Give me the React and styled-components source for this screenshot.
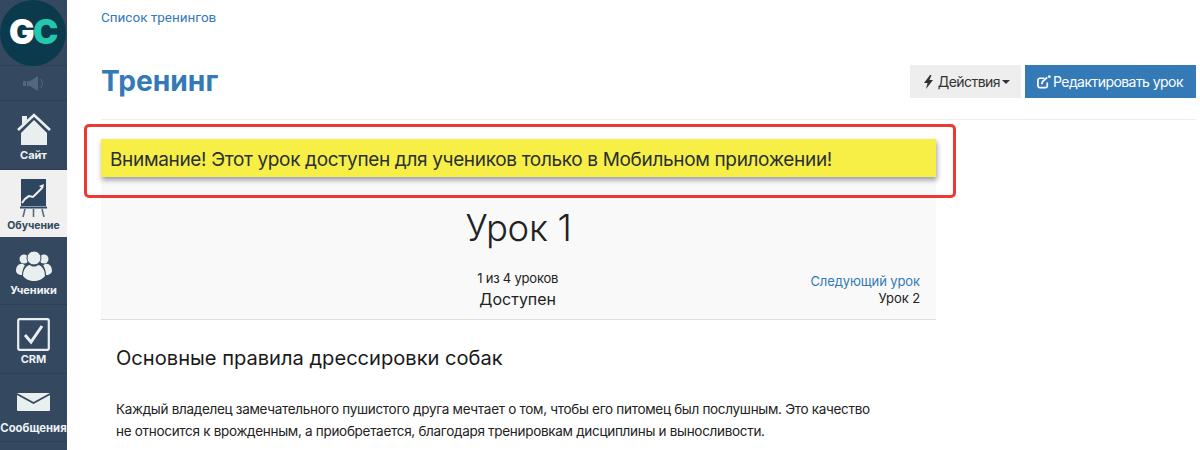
import React from "react";
import styled, { createGlobalStyle } from "styled-components";

const Global = createGlobalStyle`
  html, body { margin: 0; padding: 0; background: #fff; height: 450px; overflow: hidden; }
  #root { height: 450px; }
  * { box-sizing: border-box; }
`;
const Page = styled.div`
  display: flex; width: 1200px; height: 450px; overflow: hidden;
  font-family: Inter, "Liberation Sans", sans-serif; color: #222;
`;
const Sidebar = styled.nav`
  width: 67px; flex: none; background: #34495f; display: flex; flex-direction: column;
`;
const LogoCell = styled.div`
  height: 66px; border-bottom: 1px solid #2d4056; position: relative;
`;
const LogoCircle = styled.div`
  width: 66px; height: 66px; border-radius: 50%; background: #0b3a4c;
  display: flex; align-items: center; justify-content: center;
  font: 900 34px/1 Inter, sans-serif; letter-spacing: -1.5px; color: #fff; padding-bottom: 2px;
`;
const Teal = styled.span` color: #22c7ad; `;
const Speaker = styled.div`
  height: 35px; border-bottom: 1px solid #2d4056; display: flex; align-items: center; justify-content: center;
`;
const Item = styled.div`
  height: ${p => p.$h}px; flex: none; display: flex; flex-direction: column; align-items: center;
  padding-top: ${p => p.$pt}px; border-bottom: 1px solid ${p => p.$active ? "#f0f0f0" : "#2d4056"};
  background: ${p => p.$active ? "#f0f0f0" : "transparent"};
  color: ${p => p.$active ? "#34495f" : "#eef2f3"};
  font: 700 ${p => p.$fs || 11}px/14px Inter, "Liberation Sans", sans-serif; white-space: nowrap;
  svg { display: block; flex: none; margin-bottom: ${p => p.$gap}px; }
`;
const Main = styled.main`
  flex: 1; min-width: 0; padding-left: 34px; padding-right: 4px; position: relative;
`;
const Crumb = styled.a`
  display: block; height: 34px; padding-top: 9px; font: 400 13.5px/16px Roboto, sans-serif; color: #337ab7;
`;
const Header = styled.header`
  height: 86px; border-bottom: 1px solid #eee; display: flex; justify-content: space-between; padding-top: 30px;
`;
const Title = styled.h1`
  margin: 0; font: 700 28.2px/34px Inter, sans-serif; color: #337ab7;
`;
const Actions = styled.div` display: flex; gap: 4px; height: 33px; margin-top: 1px; `;
const Btn = styled.button`
  border: 0; height: 33px; padding: 0 ${p => p.$primary ? 13 : 11}px 0 ${p => p.$primary ? 12 : 14}px;
  display: flex; align-items: center; gap: ${p => p.$primary ? 2 : 5}px;
  background: ${p => p.$primary ? "#337ab7" : "#eee"}; color: ${p => p.$primary ? "#fff" : "#333"};
  font: 400 14px/20px Inter, sans-serif; letter-spacing: -0.55px;
`;
const Caret = styled.i`
  width: 0; height: 0; border-left: 4px solid transparent; border-right: 4px solid transparent; border-top: 4px solid #333; margin-left: -3px;
`;
const Content = styled.section` width: 835px; padding-top: 19px; `;
const Notice = styled.div`
  height: 38px; background: #f7ef45; padding-left: 9px; position: relative; z-index: 1;
  font: 400 19px/41px Inter, sans-serif; letter-spacing: -0.34px; color: #2a2f38; white-space: nowrap;
  box-shadow: 1px 3px 5px rgba(60,60,90,.5);
`;
const RedFrame = styled.div`
  position: absolute; left: 17px; top: 124px; width: 872px; height: 74px; z-index: 2;
  border: 3px solid #ea3a32; border-radius: 5px; pointer-events: none;
`;
const LessonHead = styled.div`
  height: 143px; background: #f9f9f9; border-bottom: 1px solid #ddd; padding: 26px 16px 0; position: relative;
`;
const LessonTitle = styled.div`
  text-align: center; font: 300 36.5px/50px Inter, sans-serif; color: #222; letter-spacing: -0.3px;
`;
const MetaRow = styled.div`
  display: grid; grid-template-columns: 1fr auto; align-items: start; margin-top: 15px;
`;
const Center = styled.div`
  text-align: center; font: 400 13px/21px Inter, sans-serif; letter-spacing: -0.2px; padding-left: 108px;
`;
const Status = styled.div` font-size: 16px; line-height: 21px; letter-spacing: 0; `;
const Next = styled.div`
  text-align: right; font: 400 13px/17px Inter, sans-serif; letter-spacing: -0.1px; margin-top: 5px;
  a { color: #337ab7; display: block; }
`;
const Body = styled.article` padding: 25px 15px 0; `;
const H2 = styled.h2`
  margin: 0 0 28px; font: 400 20.1px/26px Inter, sans-serif; color: #1a1a1a;
`;
const P = styled.p`
  margin: 0; font: 400 13.5px/21.5px Inter, sans-serif; letter-spacing: -0.3px; color: #222; width: 760px;
`;

const c = "#e9eeef";
const icons = {
  home: (
    <svg width="34" height="33" viewBox="0 0 34 33">
      <path fill={c} d="M4 20 17 7l13 13v12H4z" />
      <path fill="none" stroke={c} strokeWidth="2.6" d="M1 17 17 2l16 15" />
      <path fill={c} d="M5 3h5v4l-5 5z" />
    </svg>
  ),
  chart: (
    <svg width="27" height="38" viewBox="0 0 27 38">
      <rect x="1" y="0" width="25" height="27" fill="#2f4661" />
      <path fill="none" stroke="#f0f0f0" strokeWidth="2" d="M2 24q3-5 7-7l4 1 5-5 4-4" />
      <path fill="#f0f0f0" d="M19 7l5-2-1 5z" />
      <rect x="0" y="27.500" width="27" height="2" fill="#2f4661" />
      <path stroke="#5b6a7c" strokeWidth="1.600" fill="none" d="M5 30 3 38M13.500 30v8M22 30l2 8" />
    </svg>
  ),
  group: (
    <svg width="36" height="30" viewBox="0 0 36 30">
      <g fill={c}>
        <circle cx="8" cy="8" r="4.500" />
        <circle cx="28" cy="8" r="4.500" />
        <path d="M0 20c0-5 3-8 7-7 1 1 2 1 2 1-2 3-3 7-3 10l-2 0c-2-1-4-2-4-4zM36 20c0-5-3-8-7-7-1 1-2 1-2 1 2 3 3 7 3 10l2 0c2-1 4-2 4-4z" />
        <circle cx="18" cy="7" r="7" stroke="#34495f" strokeWidth="1" />
        <path d="M7 25c0-7 4-11 7-11 2 2 6 2 8 0 3 0 7 4 7 11-2 3-7 5-11 5s-9-2-11-5z" />
      </g>
    </svg>
  ),
  crm: (
    <svg width="33" height="33" viewBox="0 0 33 33">
      <rect x="1.200" y="1.200" width="30.600" height="30.600" rx="1.500" fill="none" stroke={c} strokeWidth="2.200" />
      <path fill="none" stroke={c} strokeWidth="3" d="M8 17l6 7 11-16" />
    </svg>
  ),
  mail: (
    <svg width="33" height="18" viewBox="0 0 33 18">
      <path fill={c} d="M1 0h31q1 0 1 1v16q0 1-1 1H1q-1 0-1-1V1q0-1 1-1z" />
      <path fill="none" stroke="#34495f" strokeWidth="1.800" d="M0 1l16.500 9L33 1" />
    </svg>
  ),
};

export default function App() {
  return (
    <Page>
      <Global />
      <Sidebar>
        <LogoCell><LogoCircle>G<Teal>C</Teal></LogoCircle></LogoCell>
        <Speaker>
          <svg width="22" height="15" viewBox="0 0 22 15">
            <path fill="#55677c" d="M0 5h3v5H0zM4 5h3l8-5v15l-8-5H4z" />
            <path fill="none" stroke="#55677c" d="M18 3q3 4.500 0 9" />
          </svg>
        </Speaker>
        <Item $h={69} $pt={12} $gap={2}>{icons.home}Сайт</Item>
        <Item $h={67} $pt={9} $gap={2} $active $fs={10.500}>{icons.chart}Обучение</Item>
        <Item $h={68} $pt={14} $gap={2}>{icons.group}Ученики</Item>
        <Item $h={69} $pt={13} $gap={1}>{icons.crm}CRM</Item>
        <Item $h={68} $pt={19} $gap={10} $fs={11.300}>{icons.mail}Сообщения</Item>
      </Sidebar>
      <Main>
        <Crumb>Список тренингов</Crumb>
        <Header>
          <Title>Тренинг</Title>
          <Actions>
            <Btn>
              <svg width="9" height="14" viewBox="0 0 9 14"><path fill="#333" d="M6 0 0 8h3.500L2 14l7-9H5.500l2-5z" /></svg>
              Действия<Caret />
            </Btn>
            <Btn $primary>
              <svg width="14" height="14" viewBox="0 0 15 14">
                <path fill="none" stroke="#fff" strokeWidth="1.800" d="M11 7.500V11a2 2 0 0 1-2 2H3a2 2 0 0 1-2-2V5a2 2 0 0 1 2-2h5" />
                <path fill="none" stroke="#fff" strokeWidth="1.800" d="M5 9.500l1-3 5-4.500" />
                <path fill="#fff" d="M12 0h2.500v2.500h-2.500z" />
              </svg>
              Редактировать урок
            </Btn>
          </Actions>
        </Header>
        <Content>
          <Notice>Внимание! Этот урок доступен для учеников только в Мобильном приложении!</Notice>
          <LessonHead>
            <LessonTitle>Урок 1</LessonTitle>
            <MetaRow>
              <Center>1 из 4 уроков<Status>Доступен</Status></Center>
              <Next><a>Следующий урок</a>Урок 2</Next>
            </MetaRow>
          </LessonHead>
          <Body>
            <H2>Основные правила дрессировки собак</H2>
            <P>Каждый владелец замечательного пушистого друга мечтает о том, чтобы его питомец был послушным. Это качество не относится к врожденным, а приобретается, благодаря тренировкам дисциплины и выносливости.</P>
          </Body>
        </Content>
        <RedFrame />
      </Main>
    </Page>
  );
}
